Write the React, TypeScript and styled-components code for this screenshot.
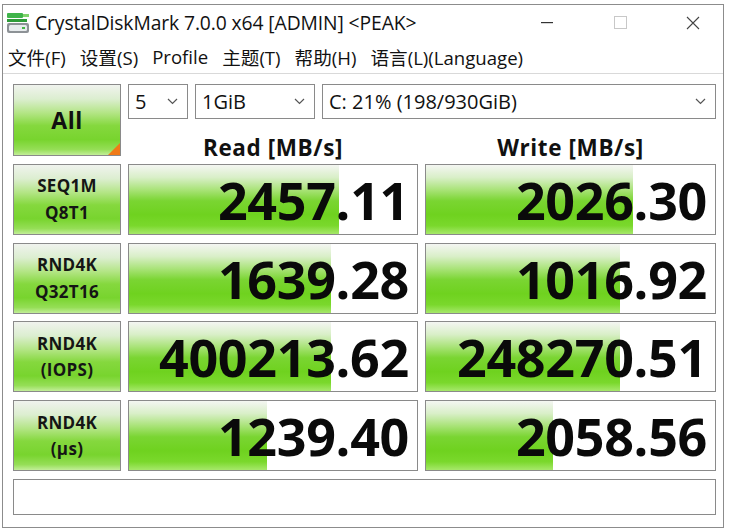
import styled, { createGlobalStyle } from "styled-components";

const GlobalStyle = createGlobalStyle`
  html, body {
    margin: 0;
    padding: 0;
    background: #ffffff;
  }
  body {
    font-family: "Open Sans", "Noto Sans CJK SC", sans-serif;
  }
`;

const Window = styled.div`
  margin: 4px 0 0 2px;
  width: 720px;
  height: 522px;
  border: 1px solid #8c8c8c;
  background: #ffffff;
  display: flex;
  flex-direction: column;
`;

const TitleBar = styled.div`
  height: 35px;
  display: flex;
  align-items: center;
  padding-left: 3px;
`;

const TitleText = styled.div`
  font-size: 19.3px;
  color: #111;
  margin-left: 5px;
  flex: 1;
  letter-spacing: -0.1px;
`;

const Controls = styled.div`
  display: flex;
  align-items: center;
  height: 100%;
  gap: 59px;
  padding-right: 23px;
`;

const ControlButton = styled.div`
  width: 14px;
  display: flex;
  align-items: center;
  justify-content: center;
`;

const MenuBar = styled.div`
  height: 33px;
  display: flex;
  align-items: center;
  gap: 14px;
  padding-left: 5px;
  border-bottom: 1px solid #d9d9d9;
  font-family: "Open Sans", "Noto Sans CJK SC", sans-serif;
  font-size: 18.6px;
  color: #111;
`;

const MenuItem = styled.span`
  white-space: nowrap;
`;

const Content = styled.div`
  flex: 1;
  padding: 10px 6px 0 10px;
  display: grid;
  grid-template-columns: 108px 290px 291px;
  grid-template-rows: 72px 71px 71px 71px 71px 36px;
  column-gap: 7px;
  row-gap: 7.8px;
`;

const greenButton = `
  background: linear-gradient(
    to bottom,
    #f0f3ee 0%,
    #dceed0 20%,
    #b3e585 40%,
    #85d83e 58%,
    #78d42e 78%,
    #95de56 92%,
    #c2ee98 100%
  );
`;

const AllButton = styled.div`
  ${greenButton}
  position: relative;
  border: 1px solid #8a8a8a;
  display: flex;
  align-items: center;
  justify-content: center;
  font-size: 23px;
  font-weight: 700;
  letter-spacing: 0.5px;
  color: #111;
  overflow: hidden;
`;

const Corner = styled.div`
  position: absolute;
  right: 0;
  bottom: 0;
  width: 0;
  height: 0;
  border-left: 12px solid transparent;
  border-bottom: 12px solid #f07a18;
`;

const TopArea = styled.div`
  grid-column: 2 / 4;
  display: grid;
  grid-template-columns: 60px 120px 1fr;
  grid-template-rows: 35px 1fr;
  column-gap: 7px;
`;

const Combo = styled.div`
  border: 1px solid #8a8a8a;
  display: flex;
  align-items: center;
  justify-content: space-between;
  padding: 0 9px 0 6px;
  font-size: 20px;
  color: #111;
`;

const HeaderRow = styled.div`
  grid-column: 1 / 4;
  display: grid;
  grid-template-columns: 290px 291px;
  column-gap: 7px;
`;

const Header = styled.div`
  display: flex;
  align-items: center;
  justify-content: center;
  font-size: 22.5px;
  font-weight: 700;
  letter-spacing: 0.6px;
  color: #111;
  padding-top: 13px;
`;

const Label = styled.div`
  ${greenButton}
  border: 1px solid #8a8a8a;
  display: flex;
  flex-direction: column;
  align-items: center;
  justify-content: center;
  gap: 7px;
  font-size: 17px;
  font-weight: 700;
  letter-spacing: 0.3px;
  color: #151515;
  line-height: 1.15;
`;

const Meter = styled.div`
  position: relative;
  border: 1px solid #8a8a8a;
  background: #ffffff;
  overflow: hidden;
`;

const Fill = styled.div`
  position: absolute;
  left: 0;
  top: 0;
  bottom: 0;
  background: linear-gradient(
    to bottom,
    #f4f6f2 0%,
    #d9efc8 18%,
    #a9e378 36%,
    #7ad532 52%,
    #6fd21f 72%,
    #7ad82c 88%,
    #a6e86a 100%
  );
`;

const Value = styled.div`
  position: relative;
  height: 100%;
  display: flex;
  align-items: center;
  justify-content: flex-end;
  padding-right: 8px;
  font-size: 52px;
  font-weight: 700;
  color: #0a0a0a;
  letter-spacing: -0.3px;
`;

const Status = styled.div`
  grid-column: 1 / 4;
  border: 1px solid #8a8a8a;
  background: #fff;
`;

const Chevron = () => (
  <svg width="11" height="7" viewBox="0 0 11 7">
    <path d="M1 1 L5.5 5.5 L10 1" fill="none" stroke="#555" strokeWidth="1.2" />
  </svg>
);

const AppIcon = () => (
  <svg width="24" height="24" viewBox="0 0 24 24">
    <rect x="1" y="2" width="16" height="5" rx="1" fill="#3fb44a" />
    <rect x="17" y="3" width="6" height="3" fill="#7fd36b" />
    <rect x="1" y="8" width="20" height="3" fill="#2f9c3a" />
    <rect x="1" y="12" width="22" height="10" rx="2" fill="#8d9296" />
    <rect x="3" y="14" width="18" height="6" rx="1.5" fill="#e8ecee" />
    <rect x="16" y="16" width="3" height="2" fill="#45b649" />
  </svg>
);

type Row = {
  top: string;
  bottom: string;
  read: string;
  readPct: number;
  write: string;
  writePct: number;
};

const rows: Row[] = [
  { top: "SEQ1M", bottom: "Q8T1", read: "2457.11", readPct: 73, write: "2026.30", writePct: 71.5 },
  { top: "RND4K", bottom: "Q32T16", read: "1639.28", readPct: 70, write: "1016.92", writePct: 67 },
  { top: "RND4K", bottom: "(IOPS)", read: "400213.62", readPct: 70, write: "248270.51", writePct: 67 },
  { top: "RND4K", bottom: "(μs)", read: "1239.40", readPct: 48, write: "2058.56", writePct: 44 },
];

const App = () => {
  return (
    <>
      <GlobalStyle />
      <Window>
        <TitleBar>
          <AppIcon />
          <TitleText>CrystalDiskMark 7.0.0 x64 [ADMIN] &lt;PEAK&gt;</TitleText>
          <Controls>
            <ControlButton>
              <svg width="12" height="2" viewBox="0 0 12 2">
                <rect width="12" height="1.2" fill="#333" />
              </svg>
            </ControlButton>
            <ControlButton>
              <svg width="13" height="13" viewBox="0 0 13 13">
                <rect x="0.5" y="0.5" width="12" height="12" fill="none" stroke="#c8c8c8" />
              </svg>
            </ControlButton>
            <ControlButton>
              <svg width="14" height="14" viewBox="0 0 14 14">
                <path d="M1 1 L13 13 M13 1 L1 13" stroke="#444" strokeWidth="1.1" />
              </svg>
            </ControlButton>
          </Controls>
        </TitleBar>
        <MenuBar>
          <MenuItem>文件(F)</MenuItem>
          <MenuItem>设置(S)</MenuItem>
          <MenuItem>Profile</MenuItem>
          <MenuItem>主题(T)</MenuItem>
          <MenuItem>帮助(H)</MenuItem>
          <MenuItem>语言(L)(Language)</MenuItem>
        </MenuBar>
        <Content>
          <AllButton>
            All
            <Corner />
          </AllButton>
          <TopArea>
            <Combo>
              5 <Chevron />
            </Combo>
            <Combo>
              1GiB <Chevron />
            </Combo>
            <Combo>
              C: 21% (198/930GiB) <Chevron />
            </Combo>
            <HeaderRow>
              <Header>Read [MB/s]</Header>
              <Header>Write [MB/s]</Header>
            </HeaderRow>
          </TopArea>
          {rows.flatMap((r, i) => [
            <Label key={`l${i}`}>
              <span>{r.top}</span>
              <span>{r.bottom}</span>
            </Label>,
            <Meter key={`r${i}`}>
              <Fill style={{ width: `${r.readPct}%` }} />
              <Value>{r.read}</Value>
            </Meter>,
            <Meter key={`w${i}`}>
              <Fill style={{ width: `${r.writePct}%` }} />
              <Value>{r.write}</Value>
            </Meter>,
          ])}
          <Status />
        </Content>
      </Window>
    </>
  );
};

export default App;
